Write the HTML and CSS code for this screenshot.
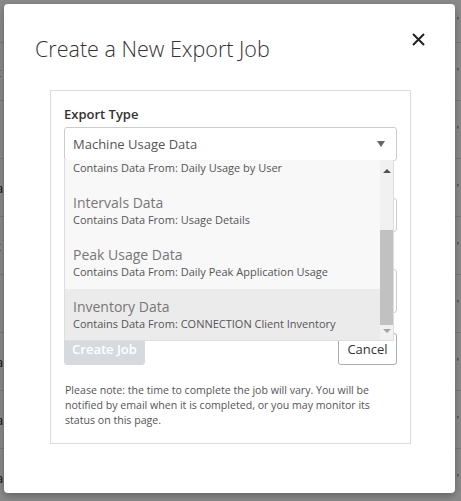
FILE: index.html
```html
<!DOCTYPE html>
<html>
<head>
<meta charset="utf-8">
<link rel="stylesheet" href="styles.css">
</head>
<body>
<div class="page">
  <div class="row first"><span class="lc"></span><span class="rc">'</span></div>
  <div class="row"><span class="lc">t</span><span class="rc">'</span></div>
  <div class="row"><span class="lc"></span><span class="rc">'</span></div>
  <div class="row"><span class="lc">a</span><span class="rc">'</span></div>
  <div class="row"><span class="lc">t</span><span class="rc">'</span></div>
  <div class="row"><span class="lc"></span><span class="rc">'</span></div>
  <div class="row"><span class="lc">a</span><span class="rc">'</span></div>
  <div class="row"><span class="lc">a</span><span class="rc">'</span></div>
  <div class="row"><span class="lc">a</span><span class="rc">'</span></div>
</div>
<div class="backdrop"></div>
<div class="modal">
  <h1 class="title">Create a New Export Job</h1>
  <button class="close" aria-label="Close">
    <svg width="13" height="13" viewBox="0 0 13 13"><path d="M1 1 L12 12 M12 1 L1 12" stroke="#222" stroke-width="2" fill="none"/></svg>
  </button>
  <div class="panel">
    <div class="group">
      <label class="label">Export Type</label>
      <div class="select-wrap">
        <div class="select">
          <span>Machine Usage Data</span>
          <span class="caret"></span>
        </div>
        <div class="dropdown">
          <div class="items">
            <div class="item">
              <div class="item-title">Machine Usage Data</div>
              <div class="item-sub">Contains Data From: Daily Usage by User</div>
            </div>
            <div class="item">
              <div class="item-title">Intervals Data</div>
              <div class="item-sub">Contains Data From: Usage Details</div>
            </div>
            <div class="item">
              <div class="item-title">Peak Usage Data</div>
              <div class="item-sub">Contains Data From: Daily Peak Application Usage</div>
            </div>
            <div class="item active">
              <div class="item-title">Inventory Data</div>
              <div class="item-sub">Contains Data From: CONNECTION Client Inventory</div>
            </div>
          </div>
          <div class="scrollbar">
            <div class="sb-btn up"><span class="tri-up"></span></div>
            <div class="sb-track"><div class="sb-thumb"></div></div>
            <div class="sb-btn down"><span class="tri-down"></span></div>
          </div>
        </div>
      </div>
    </div>
    <div class="group">
      <label class="label">Time Range</label>
      <div class="select"><span></span></div>
    </div>
    <div class="group">
      <label class="label">Email</label>
      <div class="input tall"></div>
    </div>
    <div class="actions">
      <button class="btn primary">Create Job</button>
      <button class="btn default">Cancel</button>
    </div>
    <p class="note">Please note: the time to complete the job will vary. You will be notified by email when it is completed, or you may monitor its status on this page.</p>
  </div>
</div>
</body>
</html>
```
FILE: styles.css
```css
* { box-sizing: border-box; }
html, body { margin: 0; padding: 0; }
body {
  width: 461px;
  height: 501px;
  overflow: hidden;
  font-family: "Open Sans", "Liberation Sans", sans-serif;
  background: #fff;
  position: relative;
}
.page { display: flex; flex-direction: column; }
.row {
  height: 58px;
  border-bottom: 1px solid #e2e2e2;
  display: flex;
  justify-content: space-between;
  align-items: center;
  font-size: 13px;
  color: #222;
}
.row.first { height: 43px; }
.lc { margin-left: -4px; }
.rc { margin-right: 2px; font-size: 10px; color: #444; }
.backdrop {
  position: absolute;
  inset: 0;
  background: rgba(0,0,0,0.455);
}
.modal {
  position: absolute;
  left: 4px;
  top: 4px;
  width: 451px;
  height: 489px;
  background: #fff;
  border-radius: 4px;
  box-shadow: 0 3px 9px rgba(0,0,0,0.3);
  padding-top: 29px;
}
.title {
  margin: 0 0 26px 31px;
  font-size: 21.5px;
  line-height: 31px;
  font-weight: 300;
  color: #333;
}
.close {
  position: absolute;
  top: 29px;
  right: 30px;
  width: 13px;
  height: 13px;
  padding: 0;
  border: 0;
  background: none;
  display: flex;
}
.panel {
  margin: 0 44px 0 46px;
  border: 1px solid #dcdcdc;
  padding: 14px 13px 15px 13px;
}
.group { margin-bottom: 15px; }
.label {
  display: block;
  font-size: 13px;
  line-height: 18px;
  font-weight: 600;
  color: #333;
  margin-bottom: 4px;
}
.select-wrap { position: relative; }
.select, .input {
  height: 34px;
  border: 1px solid #ccc;
  border-radius: 3px;
  display: flex;
  align-items: center;
  justify-content: space-between;
  padding: 0 11px 1px 8px;
  font-size: 13px;
  color: #555;
  background: #fff;
}
.input.tall { height: 44px; }
.caret {
  width: 0; height: 0;
  border-left: 4px solid transparent;
  border-right: 4px solid transparent;
  border-top: 6px solid #666;
}
.dropdown {
  position: absolute;
  top: 33px;
  left: 0;
  width: 330px;
  height: 181px;
  overflow: hidden;
  background: #f8f8f8;
  border: 1px solid #dedede;
  border-top: 0;
  z-index: 2;
}
.items { margin-top: -27px; }
.item {
  height: 52px;
  padding: 8px 8px 0 8px;
}
.item.active { background: #ebebeb; }
.item-title {
  font-size: 14px;
  line-height: 19px;
  color: #777;
}
.item-sub {
  font-size: 11px;
  line-height: 15px;
  color: #555;
}
.scrollbar {
  position: absolute;
  top: 0;
  right: 0;
  width: 13px;
  bottom: 0;
  display: flex;
  flex-direction: column;
  background: #f1f1f1;
}
.sb-btn {
  height: 19px;
  display: flex;
  align-items: center;
  justify-content: center;
}
.sb-btn.up { padding-top: 3px; }
.sb-btn.down { height: 16px; padding-bottom: 2px; }
.tri-up {
  width: 0; height: 0;
  border-left: 4px solid transparent;
  border-right: 4px solid transparent;
  border-bottom: 4px solid #505050;
}
.tri-down {
  width: 0; height: 0;
  border-left: 4px solid transparent;
  border-right: 4px solid transparent;
  border-top: 4px solid #a3a3a3;
}
.sb-track { flex: 1; position: relative; }
.sb-thumb {
  position: absolute;
  left: 0; right: 0;
  top: 51px;
  height: 95px;
  background: #c1c1c1;
}
.actions {
  display: flex;
  justify-content: space-between;
  margin-top: 20px;
}
.btn {
  height: 32px;
  border-radius: 3px;
  font-family: "Open Sans", "Liberation Sans", sans-serif;
  font-size: 13px;
  padding: 0;
  white-space: nowrap;
}
.btn.primary {
  width: 81px;
  background: #d6dadf;
  border: 1px solid #d6dadf;
  color: #fff;
  font-weight: 600;
}
.btn.default {
  width: 59px;
  background: #fff;
  border: 1px solid #adadad;
  color: #333;
}
.note {
  margin: 18px 0 0 1px;
  font-size: 10.6px;
  line-height: 15px;
  color: #555;
}
```
